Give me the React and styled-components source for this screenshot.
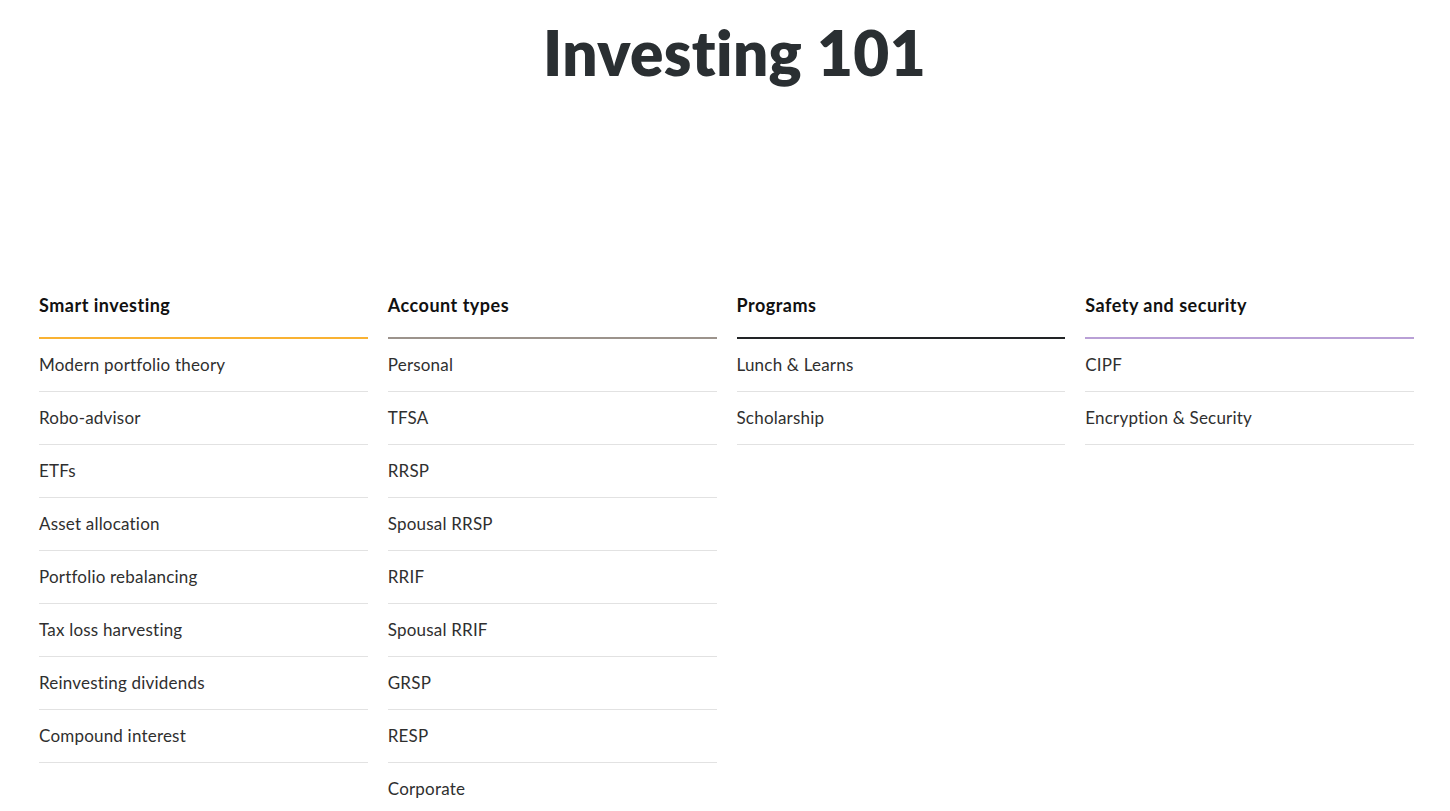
import styled, { createGlobalStyle } from 'styled-components';

const GlobalStyle = createGlobalStyle`
  html, body {
    margin: 0;
    padding: 0;
    background: #fff;
  }
  body {
    font-family: "Lato", "Noto Sans", sans-serif;
    color: #1f1f1f;
  }
`;

const sections = [
  {
    title: 'Smart investing',
    accent: '#f9b233',
    items: [
      'Modern portfolio theory',
      'Robo-advisor',
      'ETFs',
      'Asset allocation',
      'Portfolio rebalancing',
      'Tax loss harvesting',
      'Reinvesting dividends',
      'Compound interest',
    ],
  },
  {
    title: 'Account types',
    accent: '#9c938c',
    items: ['Personal', 'TFSA', 'RRSP', 'Spousal RRSP', 'RRIF', 'Spousal RRIF', 'GRSP', 'RESP', 'Corporate'],
  },
  {
    title: 'Programs',
    accent: '#222426',
    items: ['Lunch & Learns', 'Scholarship'],
  },
  {
    title: 'Safety and security',
    accent: '#b9a0d6',
    items: ['CIPF', 'Encryption & Security'],
  },
];

const Page = styled.div`
  padding: 14px 36px 0 39px;
  height: 811px;
  box-sizing: border-box;
  overflow: hidden;
`;

const Title = styled.h1`
  margin: 0;
  text-align: center;
  font-size: 62px;
  font-weight: 800;
  letter-spacing: 0.4px;
  color: #2a2f32;
  line-height: 76px;
  padding-left: 16px;
`;

const Columns = styled.div`
  display: grid;
  grid-template-columns: repeat(4, 1fr);
  column-gap: 20px;
  margin-top: 205px;
`;

const Column = styled.section`
  display: flex;
  flex-direction: column;
`;

const Heading = styled.h3`
  margin: 0;
  font-size: 18px;
  font-weight: 700;
  letter-spacing: 0.5px;
  color: #111;
  line-height: 20px;
  padding-bottom: 22px;
  border-bottom: 2px solid ${(p) => p.$accent};
`;

const List = styled.ul`
  list-style: none;
  margin: 0;
  padding: 0;
`;

const Item = styled.li`
  height: 53px;
  padding-bottom: 2px;
  box-sizing: border-box;
  display: flex;
  align-items: center;
  font-size: 17px;
  font-weight: 400;
  letter-spacing: 0.2px;
  color: #2f2f2f;
  border-bottom: 1px solid ${(p) => (p.$last ? 'transparent' : '#e2e2e2')};
`;

export default function App() {
  return (
    <Page>
      <GlobalStyle />
      <Title>Investing 101</Title>
      <Columns>
        {sections.map((s) => (
          <Column key={s.title}>
            <Heading $accent={s.accent}>{s.title}</Heading>
            <List>
              {s.items.map((it, i) => (
                <Item key={it} $last={s.title === 'Account types' && i === s.items.length - 1}>
                  {it}
                </Item>
              ))}
            </List>
          </Column>
        ))}
      </Columns>
    </Page>
  );
}
